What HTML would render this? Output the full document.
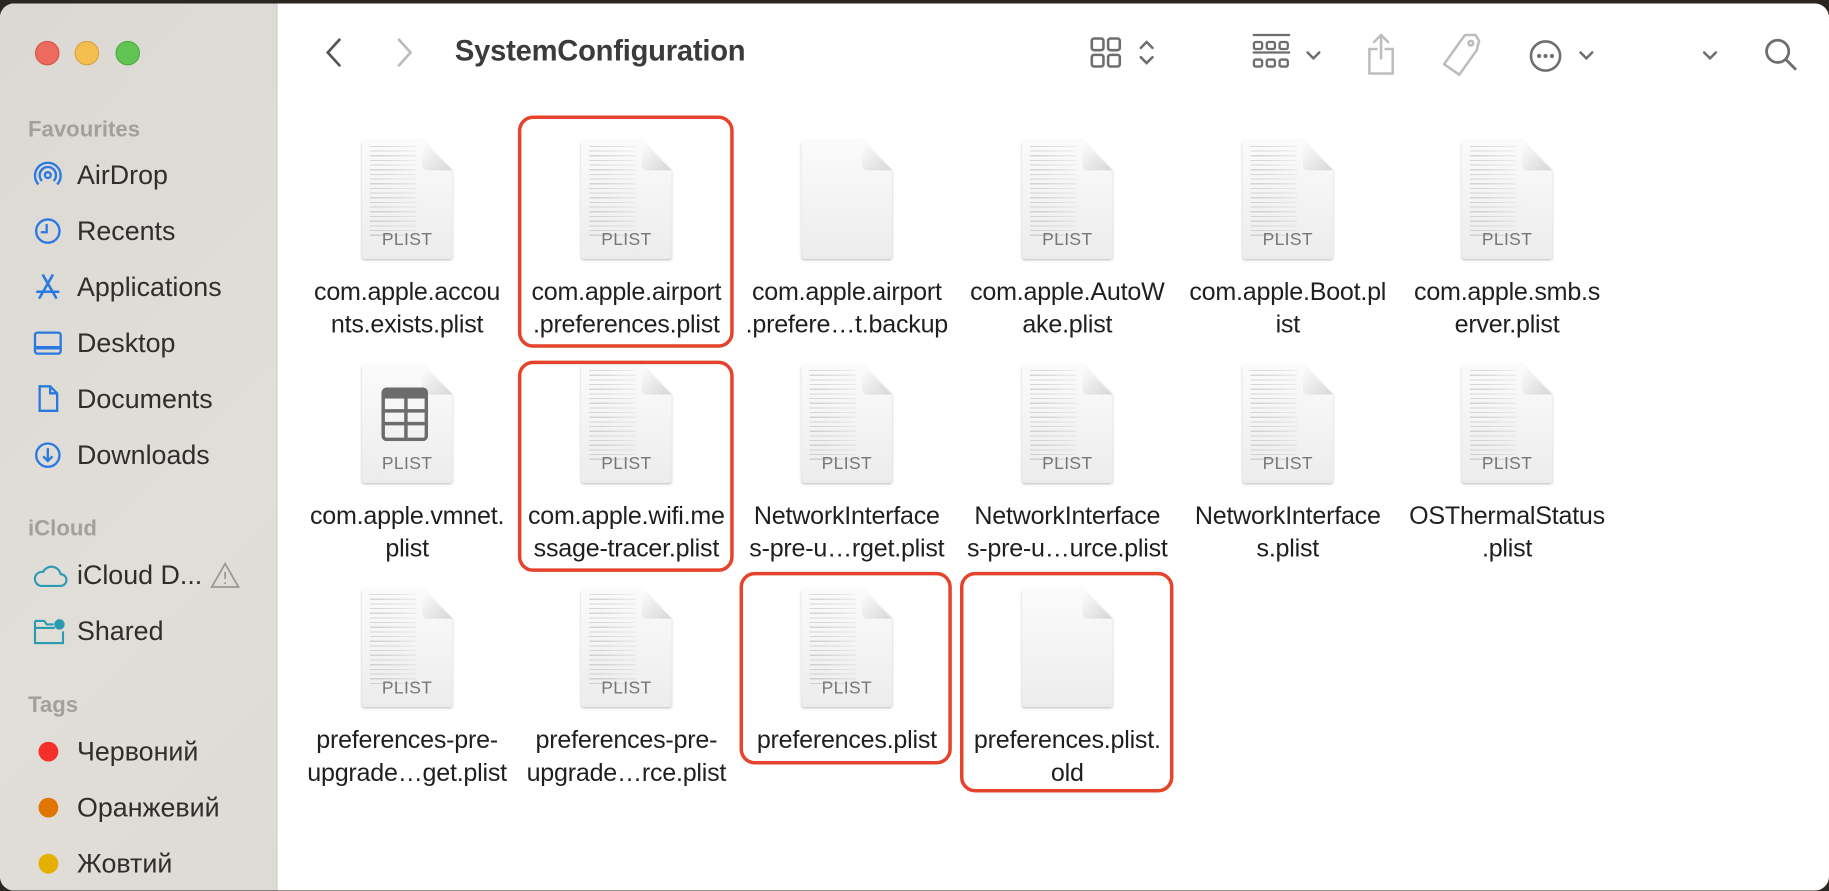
<!DOCTYPE html>
<html><head><meta charset="utf-8"><style>
*{margin:0;padding:0;box-sizing:border-box}
html,body{width:1829px;height:873px;overflow:hidden;background:#2a2722}
#w{position:absolute;left:0;top:0;width:1568px;height:748px;transform-origin:0 0;transform:scale(1.16645,1.16711);font-family:"Liberation Sans","Noto Sans CJK SC",sans-serif}
#win{position:absolute;left:0;top:3px;width:1568px;height:760px;background:#fff;border-radius:12px;overflow:hidden}
#side{position:absolute;left:0;top:0;width:238px;height:100%;background:linear-gradient(135deg,#dcd8d3,#e1ded8 60%,#dedbd5);border-right:1px solid #cfccc7}
.tl{position:absolute;top:32px;width:21px;height:21px;border-radius:50%}
.hd{position:absolute;left:24px;font-size:19px;font-weight:bold;color:#a3a09c}
.it{position:absolute;left:66px;font-size:23px;color:#2f2e2d;transform:translateY(-50%)}
.ic{position:absolute;left:28px;transform:translateY(-50%)}
.dot{position:absolute;left:33px;width:17px;height:17px;border-radius:50%;transform:translateY(-50%)}
.tb{position:absolute;transform:translate(-50%,-50%)}
.f{position:absolute;width:188px;text-align:center}
.pg{position:relative;margin:0 auto;width:78px;height:102px}
.lb{font-size:21.5px;line-height:28px;color:#1f1f1f;margin-top:14px;white-space:nowrap;letter-spacing:-.2px}
.pl{position:absolute;left:0;right:0;bottom:8px;text-align:center;font-size:15px;color:#777;letter-spacing:.3px}
.tx{position:absolute;left:7px;top:5px;width:40px;height:80px;background:repeating-linear-gradient(to bottom,rgba(150,150,150,.35) 0 1px,transparent 1px 4px);-webkit-mask:linear-gradient(to right,#000 25%,rgba(0,0,0,.3))}
.box{position:absolute;border:3px solid #e5432c;border-radius:13px}
</style></head><body><div id="w"><div id="win">
<div id="side">
<div class="tl" style="left:30px;background:#ec6a5e;border:1px solid #d25548"></div>
<div class="tl" style="left:64px;background:#f4bf4f;border:1px solid #d6a23c"></div>
<div class="tl" style="left:99px;background:#61c554;border:1px solid #4ea940"></div>
<div class="hd" style="top:98px">Favourites</div>
<svg class="ic" style="top:147px" width="26" height="26" viewBox="0 0 26 26" fill="none" stroke="#2a79e0" stroke-width="2"><circle cx="13" cy="13" r="2.5"/><path d="M8 18a7 7 0 1 1 10 0M5 21a11 11 0 1 1 16 0"/></svg>
<div class="it" style="top:147px">AirDrop</div>
<svg class="ic" style="top:195px" width="26" height="26" viewBox="0 0 26 26" fill="none" stroke="#2a79e0" stroke-width="2"><circle cx="13" cy="13" r="10"/><path d="M12 7v7H7"/></svg>
<div class="it" style="top:195px">Recents</div>
<svg class="ic" style="top:243px" width="26" height="26" viewBox="0 0 26 26" fill="none" stroke="#2a79e0" stroke-width="2.2" stroke-linecap="round"><path d="M9 3l11 19M17 3L6 22M4 17h18"/></svg>
<div class="it" style="top:243px">Applications</div>
<svg class="ic" style="top:291px" width="26" height="26" viewBox="0 0 26 26" fill="none" stroke="#2a79e0" stroke-width="2"><rect x="2" y="4" width="22" height="18" rx="2"/><path d="M3 17h20" stroke-width="3"/></svg>
<div class="it" style="top:291px">Desktop</div>
<svg class="ic" style="top:339px" width="26" height="26" viewBox="0 0 26 26" fill="none" stroke="#2a79e0" stroke-width="2"><path d="M6 2h9l6 6v15H6zM15 2v6h6"/></svg>
<div class="it" style="top:339px">Documents</div>
<svg class="ic" style="top:387px" width="26" height="26" viewBox="0 0 26 26" fill="none" stroke="#2a79e0" stroke-width="2"><circle cx="13" cy="13" r="10"/><path d="M13 7v11M9 14l4 4 4-4"/></svg>
<div class="it" style="top:387px">Downloads</div>
<div class="hd" style="top:440px">iCloud</div>
<svg class="ic" style="top:490px" width="30" height="22" viewBox="0 0 30 22" fill="none" stroke="#2a9bb0" stroke-width="1.8"><path d="M7 20h17a5 5 0 0 0 0-10 8 8 0 0 0-15-2 6 6 0 0 0-2 12z"/></svg>
<div class="it" style="top:490px">iCloud D...</div>
<svg style="position:absolute;left:180px;top:478px" width="26" height="24" viewBox="0 0 26 24" fill="none" stroke="#9b9894" stroke-width="1.5"><path d="M13 2L1.5 22h23z"/><path d="M13 9v6M13 18v1.5"/></svg>
<svg class="ic" style="top:538px" width="28" height="24" viewBox="0 0 28 24" fill="none" stroke="#2a9bb0" stroke-width="1.8"><path d="M2 3h8l2 3h6M2 3v19h24V12M2 9h17"/><circle cx="23" cy="6" r="4.5" fill="#2a9bb0" stroke="none"/></svg>
<div class="it" style="top:538px">Shared</div>
<div class="hd" style="top:591px">Tags</div>
<div class="dot" style="top:641px;background:#f5302a"></div><div class="it" style="top:641px">Червоний</div>
<div class="dot" style="top:689px;background:#e27400"></div><div class="it" style="top:689px">Оранжевий</div>
<div class="dot" style="top:737px;background:#e5b000"></div><div class="it" style="top:737px">Жовтий</div>
</div>
<svg class="tb" style="left:286px;top:42px" width="14" height="26" viewBox="0 0 14 26" fill="none" stroke="#555" stroke-width="2.3" stroke-linecap="round"><path d="M12 2L2 13l10 11"/></svg>
<svg class="tb" style="left:347px;top:42px" width="14" height="26" viewBox="0 0 14 26" fill="none" stroke="#bbb" stroke-width="2.3" stroke-linecap="round"><path d="M2 2l10 11L2 24"/></svg>
<div style="position:absolute;left:390px;top:27px;font-size:25px;font-weight:bold;color:#3b3b3b;letter-spacing:-.2px">SystemConfiguration</div>
<svg class="tb" style="left:948px;top:42px" width="28" height="28" viewBox="0 0 28 28" fill="none" stroke="#6e6e6e" stroke-width="2.2"><rect x="2" y="2" width="10" height="10" rx="2"/><rect x="16" y="2" width="10" height="10" rx="2"/><rect x="2" y="16" width="10" height="10" rx="2"/><rect x="16" y="16" width="10" height="10" rx="2"/></svg>
<svg class="tb" style="left:983px;top:42px" width="14" height="26" viewBox="0 0 14 26" fill="none" stroke="#6e6e6e" stroke-width="2.2" stroke-linecap="round"><path d="M2 9l5-5 5 5M2 17l5 5 5-5"/></svg>
<svg class="tb" style="left:1090px;top:42px" width="34" height="34" viewBox="0 0 34 34" fill="none" stroke="#6e6e6e" stroke-width="2"><path d="M1 2h32M1 17h32"/><rect x="2" y="8" width="7" height="6" rx="1.5"/><rect x="13" y="8" width="7" height="6" rx="1.5"/><rect x="24" y="8" width="7" height="6" rx="1.5"/><rect x="2" y="23" width="7" height="6" rx="1.5"/><rect x="13" y="23" width="7" height="6" rx="1.5"/><rect x="24" y="23" width="7" height="6" rx="1.5"/></svg>
<svg class="tb" style="left:1126px;top:45px" width="14" height="10" viewBox="0 0 14 10" fill="none" stroke="#6e6e6e" stroke-width="2.2" stroke-linecap="round"><path d="M2 2l5 5 5-5"/></svg>
<svg class="tb" style="left:1184px;top:44px" width="26" height="38" viewBox="0 0 26 38" fill="none" stroke="#bdbdbd" stroke-width="2.2" stroke-linecap="round"><path d="M13 2v20M7 8l6-6 6 6M9 14H3v21h20V14h-6"/></svg>
<svg class="tb" style="left:1252px;top:44px" width="36" height="40" viewBox="0 0 36 40" fill="none" stroke="#bdbdbd" stroke-width="2.2" stroke-linejoin="round"><path d="M22 3h9l3 5-2 8L17 37 4 28 19 7z"/><circle cx="27" cy="10" r="2"/></svg>
<svg class="tb" style="left:1325px;top:45px" width="30" height="30" viewBox="0 0 30 30"><circle cx="15" cy="15" r="12.5" fill="none" stroke="#6e6e6e" stroke-width="2.2"/><circle cx="9.5" cy="15" r="1.8" fill="#6e6e6e"/><circle cx="15" cy="15" r="1.8" fill="#6e6e6e"/><circle cx="20.5" cy="15" r="1.8" fill="#6e6e6e"/></svg>
<svg class="tb" style="left:1360px;top:45px" width="14" height="10" viewBox="0 0 14 10" fill="none" stroke="#6e6e6e" stroke-width="2.2" stroke-linecap="round"><path d="M2 2l5 5 5-5"/></svg>
<svg class="tb" style="left:1466px;top:45px" width="14" height="10" viewBox="0 0 14 10" fill="none" stroke="#6e6e6e" stroke-width="2.2" stroke-linecap="round"><path d="M2 2l5 5 5-5"/></svg>
<svg class="tb" style="left:1527px;top:44px" width="30" height="30" viewBox="0 0 30 30" fill="none" stroke="#6e6e6e" stroke-width="2.4" stroke-linecap="round"><circle cx="12" cy="12" r="9.5"/><path d="M19 19l8 8"/></svg>

<svg width="0" height="0" style="position:absolute"><defs>
<linearGradient id="g" x1="0" y1="0" x2="0" y2="1"><stop offset="0" stop-color="#fbfbfb"/><stop offset="1" stop-color="#ececec"/></linearGradient>
<linearGradient id="g2" x1="0" y1="0" x2="1" y2="1"><stop offset="0" stop-color="#fff"/><stop offset="1" stop-color="#d6d6d6"/></linearGradient>
</defs></svg>

<div id="grid"></div>
<div class="box" style="left:444px;top:96px;width:185px;height:199px"></div>
<div class="box" style="left:444px;top:306px;width:185px;height:181px"></div>
<div class="box" style="left:634px;top:487px;width:182px;height:165px"></div>
<div class="box" style="left:823px;top:487px;width:183px;height:189px"></div>
</div></div>
<script>
var D=[
[0,0,"com.apple.accou|nts.exists.plist","t"],[1,0,"com.apple.airport|.preferences.plist","t"],[2,0,"com.apple.airport|.prefere…t.backup","b"],[3,0,"com.apple.AutoW|ake.plist","t"],[4,0,"com.apple.Boot.pl|ist","t"],[5,0,"com.apple.smb.s|erver.plist","t"],
[0,1,"com.apple.vmnet.|plist","v"],[1,1,"com.apple.wifi.me|ssage-tracer.plist","t"],[2,1,"NetworkInterface|s-pre-u…rget.plist","t"],[3,1,"NetworkInterface|s-pre-u…urce.plist","t"],[4,1,"NetworkInterface|s.plist","t"],[5,1,"OSThermalStatus|.plist","t"],
[0,2,"preferences-pre-|upgrade…get.plist","t"],[1,2,"preferences-pre-|upgrade…rce.plist","t"],[2,2,"preferences.plist","t"],[3,2,"preferences.plist.|old","b"]];
var cx=[349,537,726,915,1104,1292],ty=[117,309,501],h="";
D.forEach(function(d){
var inner='<svg width="78" height="102" viewBox="0 0 78 102" style="position:absolute;left:0;top:0;filter:drop-shadow(0 1px 1px rgba(0,0,0,.25))"><path d="M3 0H52L78 26V99a3 3 0 0 1-3 3H3a3 3 0 0 1-3-3V3a3 3 0 0 1 3-3z" fill="url(#g)"/><path d="M52 0V22a4 4 0 0 0 4 4H78z" fill="url(#g2)"/></svg>';
if(d[3]=="t")inner+='<div class="tx"></div>';
if(d[3]=="v")inner+='<svg width="40" height="46" viewBox="0 0 40 46" style="position:absolute;left:17px;top:20px"><rect x="1.5" y="1.5" width="37" height="43" rx="3" fill="none" stroke="#6c6c6c" stroke-width="3"/><rect x="1.5" y="1.5" width="37" height="8" fill="#6c6c6c"/><path d="M1.5 20h37M1.5 31h37M21 1.5v43" stroke="#6c6c6c" stroke-width="3"/></svg>';
if(d[3]!="b")inner+='<div class="pl">PLIST</div>';
h+='<div class="f" style="left:'+(cx[d[0]]-94)+'px;top:'+ty[d[1]]+'px"><div class="pg">'+inner+'</div><div class="lb">'+d[2].split("|").join("<br>")+'</div></div>';
});
document.getElementById("grid").innerHTML=h;
</script>
</body></html>
